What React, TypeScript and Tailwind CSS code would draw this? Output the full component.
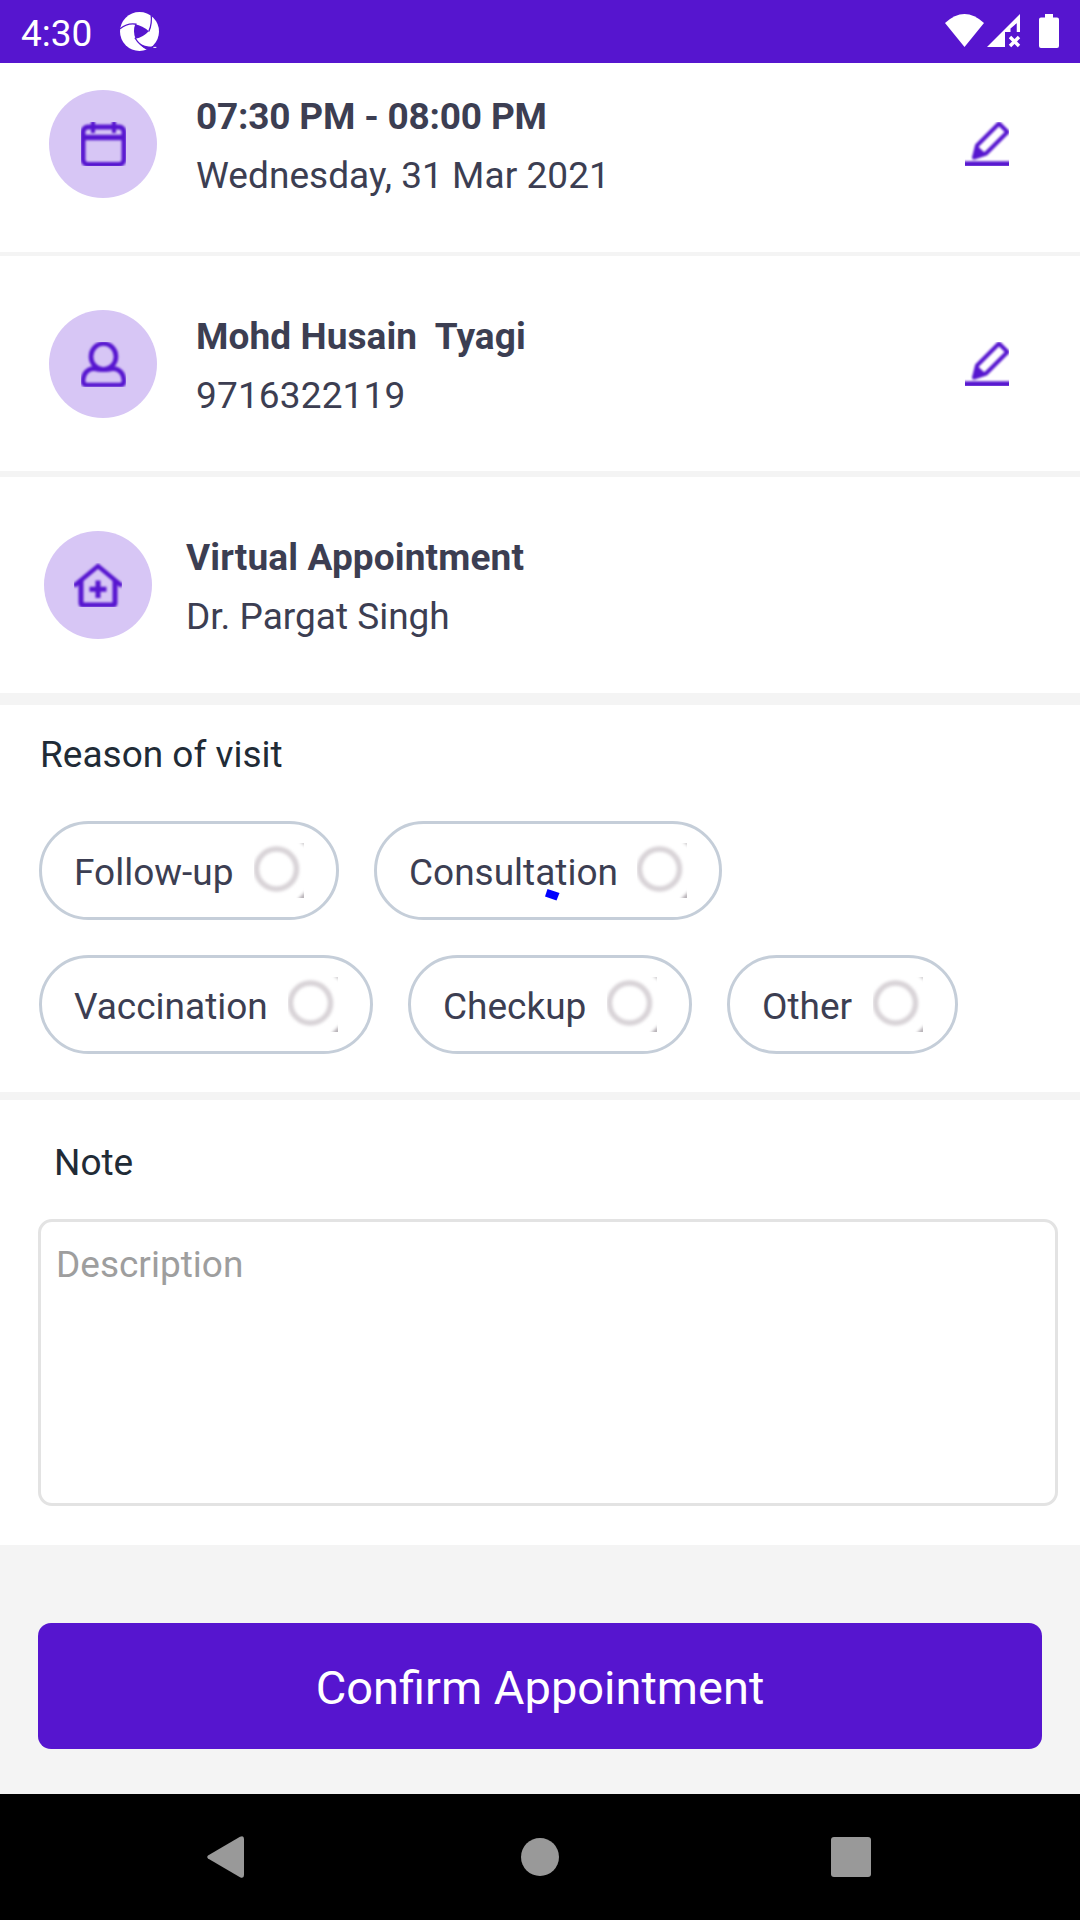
import type { ReactNode } from "react";

function StatusBar() {
  return (
    <header className="flex h-[63px] items-center justify-between bg-[#5615cf] pl-[21px] pr-[21px] text-white">
      <div className="flex h-full items-center">
        <span className="w-[99px] pt-[3px] text-[37px] leading-[59px]">4:30</span>
        <svg className="h-[39px] w-[39px]" viewBox="0 0 118 118">
          <circle cx="59" cy="59" r="59" fill="#fff" />
          <path d="M46 37Q68 41 87 58Q70 76 47 81Q38 58 46 37Z" fill="#5615cf" />
          <g fill="none" stroke="#5615cf" strokeWidth="4">
            <path d="M0 51Q22 32 50 37" />
            <path d="M94 4Q98 36 87 59" />
            <path d="M45 78Q58 100 84 114" />
          </g>
          <path d="M58 93Q72 105 100 105L112 107L98 114L82 113Q66 106 58 93Z" fill="#5615cf" />
          <path d="M101 107h9" stroke="#fff" strokeWidth="3" />
        </svg>
      </div>
      <div className="flex h-full items-start pt-[14px]">
        <svg className="h-[34px] w-[114px]" viewBox="0 0 114 34" fill="#fff">
          <path d="M0 9Q19.500 -9 39 9L19.500 33Z" />
          <path d="M42 33L75 0V18H71.500V9L66 18H60V33Z" />
          <path d="M71.500 9.500V18H65.500V14.500Z" fill="#5615cf" />
          <path d="M65 23L74 32M74 23L65 32" stroke="#fff" strokeWidth="3.400" />
          <path d="M100 0h8v3.500h4q2 0 2 2V32q0 2-2 2H96q-2 0-2-2V5.500q0-2 2-2h4Z" />
        </svg>
      </div>
    </header>
  );
}

function CalendarIcon() {
  return (
    <svg className="mt-8 ml-8 h-11 w-[45px]" viewBox="0 0 45 44" fill="none" stroke="#5615cf">
      <g className="blur-[0.8px]">
        <rect x="2" y="5" width="41" height="37.500" rx="5" strokeWidth="5" />
        <path d="M2 15.500H43" strokeWidth="5.500" />
        <path d="M12 -1V11M33 -1V11" strokeWidth="4" />
      </g>
    </svg>
  );
}

function UserIcon() {
  return (
    <svg className="mt-8 ml-8 h-[45px] w-[45px]" viewBox="0 0 45 45" fill="none" stroke="#5615cf" strokeWidth="4.600">
      <g className="blur-[0.8px]">
        <ellipse cx="22.500" cy="14.500" rx="12.500" ry="13" />
        <path d="M12.500 26.500Q2.500 28 2 39Q2 43 6 43H39Q43 43 43 39Q42.500 28 32.500 26.500Q22.500 29 12.500 26.500Z" />
      </g>
    </svg>
  );
}

function HouseIcon() {
  return (
    <svg className="mt-8 ml-[30px] h-11 w-12" viewBox="0 0 48 44" fill="none" stroke="#5615cf">
      <g className="blur-[0.8px]">
        <path d="M0 23L24 3L48 23" strokeWidth="4.400" />
        <path d="M7 18V39.500Q7 42 9 42H39Q41 42 41 39.500V18" strokeWidth="5" />
        <path d="M24 17.500V35M15.500 26.300H32.500" strokeWidth="5" />
      </g>
    </svg>
  );
}

function EditIcon() {
  return (
    <svg className="mt-8 h-11 w-11" viewBox="0 0 44 44" fill="none" stroke="#5615cf">
      <g className="blur-[0.9px]">
        <path d="M34 1.500L42.500 10L21 31.500L9 35.500L12 23.500Z" strokeWidth="4" strokeLinejoin="round" />
        <path d="M12 24.500L20 32L9 36Z" fill="#5615cf" strokeWidth="1.500" />
        <path d="M-3 42H47" strokeWidth="5.500" />
      </g>
    </svg>
  );
}

interface InfoRowProps {
  icon: ReactNode;
  title: string;
  subtitle: string;
  className: string;
  textClassName: string;
  titleClassName: string;
  subtitleClassName?: string;
  editable?: boolean;
}

function InfoRow({
  icon,
  title,
  subtitle,
  className,
  textClassName,
  titleClassName,
  subtitleClassName = "",
  editable,
}: InfoRowProps) {
  return (
    <section className={`flex items-start bg-white pr-[71px] ${className}`}>
      <div className="h-[108px] w-[108px] shrink-0 rounded-full bg-[#d7c6f5]">{icon}</div>
      <div className={`-mt-[3px] flex-1 whitespace-pre text-[37px] leading-[59px] text-[#3c3e52] ${textClassName}`}>
        <p className={`font-bold ${titleClassName}`}>{title}</p>
        <p className={subtitleClassName}>{subtitle}</p>
      </div>
      {editable && <EditIcon />}
    </section>
  );
}

function RadioMark() {
  return (
    <svg className="mb-px h-[55px] w-[50px]" viewBox="0 0 50 55">
      <g className="blur-[1.5px]">
        <circle cx="22.500" cy="26" r="20" fill="none" stroke="#d8d3d7" strokeWidth="5.500" />
        <path d="M44 56L52 48V58H44Z" fill="#b5b0b5" />
        <path d="M45 -2H52V4Z" fill="#c8c5c8" />
      </g>
    </svg>
  );
}

function Chip({ label, width, marked }: { label: string; width: string; marked?: boolean }) {
  return (
    <button
      className={`relative flex h-[99px] items-center justify-between rounded-full border-3 border-[#c5ced9] px-8 ${width}`}
    >
      <span className="pt-[3px] text-[37px] leading-[59px] text-[#3c3e52]">{label}</span>
      <RadioMark />
      {marked && (
        <svg className="absolute left-[168px] top-[65px] h-3 w-[15px]" viewBox="0 0 15 12">
          <path d="M2.500 0L14.500 4L11.500 11.500L0 7.500Z" fill="#0000ff" />
        </svg>
      )}
    </button>
  );
}

export default function App() {
  return (
    <div className="flex h-[1920px] w-[1080px] flex-col overflow-hidden bg-[#f4f4f4] font-[Roboto,sans-serif]">
      <StatusBar />
      <InfoRow
        icon={<CalendarIcon />}
        title="07:30 PM - 08:00 PM"
        subtitle="Wednesday, 31 Mar 2021"
        className="h-[189px] pl-[49px] pt-[27px]"
        textClassName="pl-[39px]"
        titleClassName="tracking-[-0.2px]"
        subtitleClassName="tracking-[0.05px]"
        editable
      />
      <InfoRow
        icon={<UserIcon />}
        title="Mohd Husain  Tyagi"
        subtitle="9716322119"
        className="mt-1 h-[215px] pl-[49px] pt-[54px]"
        textClassName="pl-[39px]"
        titleClassName="tracking-[0.09px]"
        subtitleClassName="tracking-[0.15px]"
        editable
      />
      <InfoRow
        icon={<HouseIcon />}
        title="Virtual Appointment"
        subtitle="Dr. Pargat Singh"
        className="mt-1.5 h-[216px] pl-11 pt-[54px]"
        textClassName="pl-[34px]"
        titleClassName="tracking-[0.13px]"
      />

      <section className="mt-3 h-[387px] bg-white pl-[39px] pt-5">
        <h2 className="pl-px text-[37px] leading-[59px] text-[#212b36]">Reason of visit</h2>
        <div className="mt-[37px] flex gap-[35px]">
          <Chip label="Follow-up" width="w-[300px]" />
          <Chip label="Consultation" width="w-[348px]" marked />
        </div>
        <div className="mt-[35px] flex gap-[35px]">
          <Chip label="Vaccination" width="w-[334px]" />
          <Chip label="Checkup" width="w-[284px]" />
          <Chip label="Other" width="w-[231px]" />
        </div>
      </section>

      <section className="mt-2 h-[445px] bg-white pl-[38px] pr-[22px] pt-[33px]">
        <h2 className="pl-4 text-[37px] leading-[59px] text-[#212b36]">Note</h2>
        <textarea
          className="mt-[27px] block h-[287px] w-[1020px] resize-none rounded-[14px] border-3 border-[#e3e3e3] px-[15px] pt-[13px] text-[37px] leading-[59px] outline-none placeholder:text-[#9e9e9e]"
          placeholder="Description"
        />
      </section>

      <div className="h-[249px] pl-[38px] pt-[78px]">
        <button className="h-[126px] w-[1004px] rounded-[13px] bg-[#5615cf] pt-[3px] text-[47px] leading-[60px] text-white">
          Confirm Appointment
        </button>
      </div>

      <nav className="flex h-[126px] items-center justify-between bg-black pl-[207px] pr-[209px]">
        <svg className="h-[42px] w-[37px]" viewBox="0 0 37 42" fill="#999">
          <path d="M1 19.500L33 .8Q37 -1 37 3V39Q37 43 33 41.200L1 22.500Q-.5 21 1 19.500Z" />
        </svg>
        <span className="ml-1 h-[38px] w-[38px] rounded-full bg-[#999]" />
        <span className="h-10 w-10 rounded-[3px] bg-[#999]" />
      </nav>
    </div>
  );
}
